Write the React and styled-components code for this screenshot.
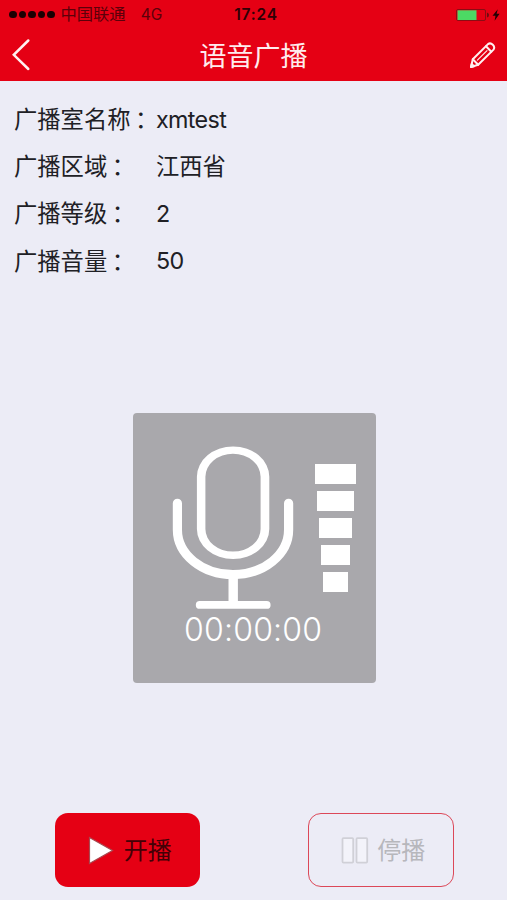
import React from "react";
import styled, { createGlobalStyle } from "styled-components";

const RED = "#e50014";

const GlobalStyle = createGlobalStyle`
  * { box-sizing: border-box; }
  body {
    margin: 0;
    background: #ececf6;
    font-family: Inter, "Noto Sans CJK SC", sans-serif;
  }
`;

const Screen = styled.div`
  width: 507px;
  height: 900px;
  display: flex;
  flex-direction: column;
  background: #ececf6;
  overflow: hidden;
`;

const Header = styled.header`
  height: 81px;
  flex: none;
  background: ${RED};
`;

const StatusBar = styled.div`
  height: 29px;
  display: grid;
  grid-template-columns: 1fr auto 1fr;
  align-items: center;
  padding: 0 6px 0 9px;
  color: #5c000a;
`;

const Carrier = styled.div`
  display: flex;
  align-items: center;
  font-size: 16.3px;
  line-height: 29px;
`;

const Signal = styled.div`
  display: flex;
  gap: 2px;
  margin-right: 6px;
`;

const Dot = styled.i`
  width: 7.5px;
  height: 7.5px;
  border-radius: 50%;
  background: #1c0003;
`;

const Network = styled.span`
  margin-left: 15px;
  font-size: 15.5px;
`;

const Clock = styled.div`
  padding-left: 2px;
  font-size: 15.5px;
  font-weight: 600;
  letter-spacing: 0.8px;
  color: #300005;
`;

const Power = styled.div`
  display: flex;
  justify-content: flex-end;
`;

const NavBar = styled.div`
  height: 52px;
  display: grid;
  grid-template-columns: 60px 1fr 60px;
  align-items: center;
`;

const Title = styled.h1`
  margin: 0;
  padding-top: 3px;
  text-align: center;
  color: #ffecee;
  font-size: 27px;
  font-weight: 400;
  line-height: 49px;
`;

const NavButton = styled.button`
  display: flex;
  justify-content: ${(p) => (p.$end ? "flex-end" : "flex-start")};
  padding: ${(p) => (p.$end ? "0 11px 0 0" : "0 0 0 11px")};
  border: 0;
  background: none;
`;

const InfoList = styled.dl`
  margin: 0;
  padding: 14px 14px 0;
  height: 332px;
  flex: none;
`;

const InfoRow = styled.div`
  display: grid;
  grid-template-columns: 142px 1fr;
  height: 47.2px;
  align-items: center;
  color: #202025;
  font-size: 23.3px;
  line-height: 47px;
`;

const Label = styled.dt`
  padding-top: 1px;
  white-space: nowrap;
`;

const Colon = styled.span`
  display: inline-block;
  margin-left: 4.5px;
  letter-spacing: -12px;
`;

const Value = styled.dd`
  margin: 0;
  padding-top: ${(p) => (p.$latin ? 0 : 1)}px;
  letter-spacing: ${(p) => (p.$latin ? "-0.65px" : "0")};
`;

const Recorder = styled.section`
  width: 243px;
  height: 270px;
  flex: none;
  align-self: center;
  display: grid;
  grid-template-columns: 182px 42px;
  grid-template-rows: 197px 38px;
  margin-left: 1px;
  border-radius: 4px;
  background: #a9a8ac;
`;

const Levels = styled.div`
  display: flex;
  flex-direction: column;
  align-items: center;
  gap: 6.4px;
  padding-top: 50.6px;
`;

const Level = styled.div`
  width: ${(p) => p.$width}px;
  height: 20.6px;
  flex: none;
  background: #fff;
`;

const Timer = styled.div`
  grid-column: 1 / -1;
  padding: 1px 0 0 51.5px;
  color: #fff;
  font-size: 32px;
  font-weight: 300;
  letter-spacing: 0.2px;
  line-height: 38px;
`;

const Actions = styled.footer`
  display: flex;
  justify-content: space-between;
  margin-top: auto;
  padding: 0 53.5px 13px 54.5px;
`;

const ActionButton = styled.button`
  width: 145.5px;
  height: 74px;
  display: flex;
  align-items: center;
  justify-content: center;
  gap: ${(p) => (p.$primary ? 10 : 8)}px;
  padding: 1px 0 0 5px;
  border: ${(p) => (p.$primary ? "0" : "1.5px solid #dc4858")};
  border-radius: 13px;
  background: ${(p) => (p.$primary ? RED : "transparent")};
  color: ${(p) => (p.$primary ? "#430006" : "#b7b7bc")};
  font: 400 24px/36px Inter, "Noto Sans CJK SC", sans-serif;
`;

const ActionLabel = styled.span`
  padding-top: 1px;
`;

const fields = [
  ["广播室名称", "xmtest"],
  ["广播区域", "江西省"],
  ["广播等级", "2"],
  ["广播音量", "50"],
];

const BatteryIcon = () => (
  <svg width="46" height="14" viewBox="0 0 46 14">
    <rect x="1.5" y="1.5" width="29" height="11" rx="1.5" fill="none" stroke="#8c0c14" />
    <rect x="2.5" y="2.3" width="19" height="9.7" fill="#4cd964" />
    <path d="M32 4.5q2 .5 2 2.5t-2 2.5z" fill="#6c0c10" />
    <path d="M42.8 1.2L37.5 7.8h3l-.9 5 5-7h-3z" fill="#240004" />
  </svg>
);

const BackIcon = () => (
  <svg width="20" height="34" viewBox="0 0 20 34">
    <path d="M17.3 2.5L2.8 16.8 17.3 31" fill="none" stroke="#fff0f1" strokeWidth="2.5" strokeLinecap="round" />
  </svg>
);

const PencilIcon = () => (
  <svg width="27" height="27" viewBox="0 0 27 27" fill="none" stroke="#fff0f1" strokeWidth="2" strokeLinejoin="round" strokeLinecap="round">
    <path d="M2 25l1.8-7.7L19 2.1q2.4-1.7 4.8.7t.7 4.8L9.2 22.8z" />
    <path d="M3.8 17.3L9.2 22.8M17 4.3l5.3 5.4" />
    <path d="M8.4 18.2L18 8.6" strokeWidth="1.1" />
    <path d="M2 25l.7-3 2.3 2.3z" fill="#fff0f1" />
  </svg>
);

const MicIcon = () => (
  <svg width="182" height="197" viewBox="132.8 413.2 182 197" fill="none" stroke="#fff">
    <path fill="#fff" fillRule="evenodd" stroke="none" d="M196.7 477a36.2 30.3 0 0 1 72.4 0v52.3a36.2 30 0 0 1-72.4 0zM205.2 477v52.3a27.6 22.5 0 0 0 55.2 0V477a27.6 23 0 0 0-55.2 0z" />
    <path d="M177.2 503.5V530a55.6 44.8 0 0 0 111.2 0v-26.5" strokeWidth="9.2" strokeLinecap="round" />
    <path d="M233 576v28" strokeWidth="9.4" />
    <path d="M199.5 605.1h67" strokeWidth="7.8" strokeLinecap="round" />
  </svg>
);

const PlayIcon = () => (
  <svg width="26" height="29" viewBox="0 0 26 29">
    <path d="M1.5 1.5L24.5 14.5 1.5 27.5z" fill="#fff" stroke="#a84850" strokeWidth="1.2" />
  </svg>
);

const PauseIcon = () => (
  <svg width="28" height="27" viewBox="0 0 28 27" fill="#f3f3fa" stroke="#d0d0d7" strokeWidth="1.8">
    <rect x="1.5" y="1.2" width="10.7" height="24.4" rx="1" />
    <rect x="15.5" y="1.2" width="10.7" height="24.4" rx="1" />
  </svg>
);

export default function App() {
  return (
    <Screen>
      <GlobalStyle />
      <Header>
        <StatusBar>
          <Carrier>
            <Signal>{[0, 1, 2, 3, 4].map((n) => <Dot key={n} />)}</Signal>
            <span>中国联通</span>
            <Network>4G</Network>
          </Carrier>
          <Clock>17:24</Clock>
          <Power><BatteryIcon /></Power>
        </StatusBar>
        <NavBar>
          <NavButton aria-label="返回"><BackIcon /></NavButton>
          <Title>语音广播</Title>
          <NavButton $end aria-label="编辑"><PencilIcon /></NavButton>
        </NavBar>
      </Header>
      <InfoList>
        {fields.map(([label, value]) => (
          <InfoRow key={label}>
            <Label>{label}<Colon>：</Colon></Label>
            <Value $latin={/^\w+$/.test(value)}>{value}</Value>
          </InfoRow>
        ))}
      </InfoList>
      <Recorder>
        <MicIcon />
        <Levels>
          {[41.4, 37, 32.8, 28.6, 24.6].map((w) => <Level key={w} $width={w} />)}
        </Levels>
        <Timer>00:00:00</Timer>
      </Recorder>
      <Actions>
        <ActionButton $primary><PlayIcon /><ActionLabel>开播</ActionLabel></ActionButton>
        <ActionButton><PauseIcon /><ActionLabel>停播</ActionLabel></ActionButton>
      </Actions>
    </Screen>
  );
}
